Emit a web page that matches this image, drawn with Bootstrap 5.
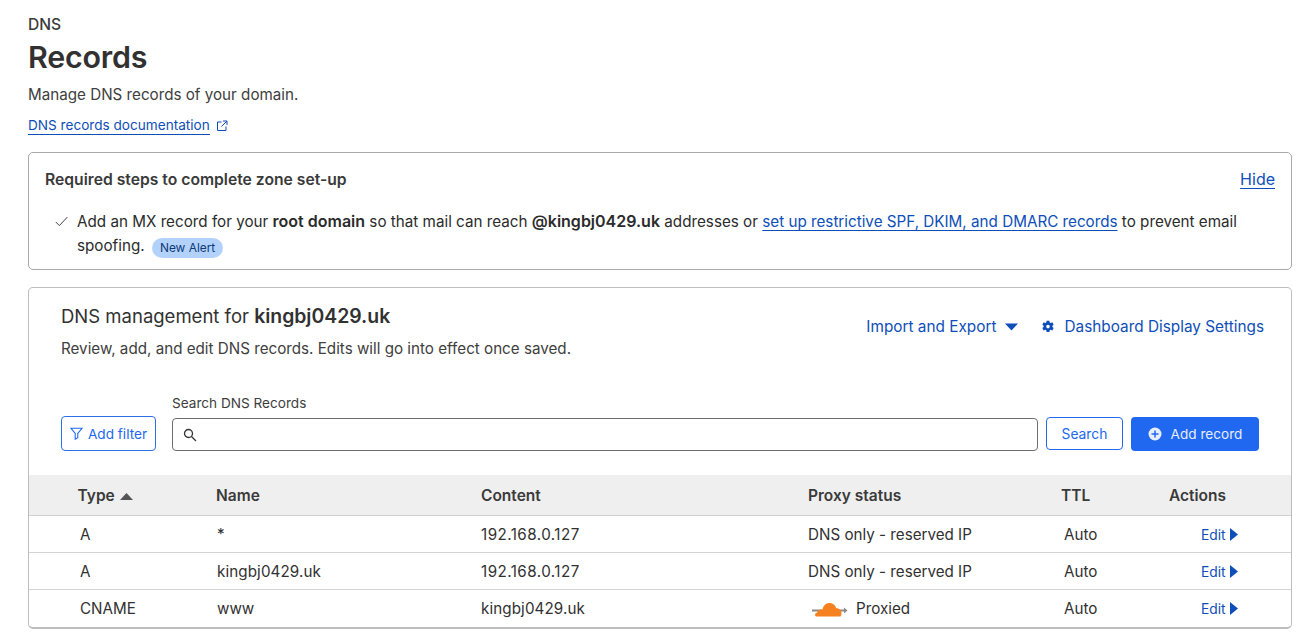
<!DOCTYPE html>
<html lang="en">
<head>
<meta charset="utf-8">
<title>DNS Records</title>
<link href="https://cdn.jsdelivr.net/npm/bootstrap@5.3.0/dist/css/bootstrap.min.css" rel="stylesheet">
<style>
html,body{height:639px;overflow:hidden}
body{font-family:Inter,"Liberation Sans",sans-serif;color:#313131;background:#fff;font-size:16px;line-height:24px}
a{color:#0e4eb8}
.page-wrap{padding:14px 24px 0 28px}
.eyebrow{font-size:15.6px;line-height:21px;font-weight:500;margin:0;color:#3a3a3a}
.page-title{font-size:30.4px;line-height:36px;font-weight:600;margin:4px 0 0;letter-spacing:-.2px}
.page-sub{font-size:15.2px;line-height:22px;margin:9px 0 0;color:#404040}
.doc-link{display:inline-flex;align-items:center;font-size:13.6px;line-height:18px;margin-top:10px;text-decoration:none}
.doc-link span{border-bottom:1px solid #0e4eb8}
.doc-link svg{margin-left:6px}
.steps-box{margin-top:16px;height:118px;border:1px solid #a9a9a9;border-radius:5px;padding:15px 16px 0 16px}
.steps-title{font-size:15.7px;line-height:24px;font-weight:600;margin:0;color:#3a3a3a}
.hide-link{font-size:16px;line-height:22px;color:#0e4eb8;text-decoration:underline;text-underline-offset:3px}
.step-row{margin-top:17px;font-size:15.22px;line-height:24px;color:#2b2b2b}
.step-row svg{flex:none;margin:7px 9px 0 10px}
.step-row b{font-weight:600;font-size:16px}
.step-row a{text-underline-offset:3px}
.alert-pill{display:inline-block;background:#b3d2fb;color:#0e3a7a;font-size:11.9px;line-height:20px;padding:0 8px;border-radius:10px;margin-left:3px;vertical-align:-1px}
.mgmt-box{margin-top:17px;height:342px;border:1px solid #bdbdbd;border-bottom:2px solid #bdbdbd;border-radius:5px;overflow:hidden}
.mgmt-head{height:105px;padding:15px 27px 0 32px}
.mgmt-title{font-size:18.5px;line-height:26px;margin:0;font-weight:400}
.mgmt-title b{font-weight:600;font-size:19.4px}
.mgmt-sub{font-size:15.2px;line-height:22px;margin:9px 0 0;color:#404040}
.head-links{margin-top:13px;gap:22px;font-size:15.35px;line-height:22px}
.head-links a{text-decoration:none;display:inline-flex;align-items:center}
.caret-gap{margin-left:8px}
.gear-gap{margin-right:9px}
.search-row{padding:0 32px 0 32px;height:82px}
.filter-btn{width:95px;height:35px;flex:none;margin:23px 16px 0 0;border:1px solid #2c6fe6;border-radius:4px;background:#fff;color:#2168f0;font-size:13.6px;padding:0;display:flex;align-items:center;justify-content:center;gap:5px}
.search-col{flex:1;min-width:0;padding-top:1px}
.search-label{font-size:13.6px;line-height:18px;color:#3d3d3d;margin:0 0 6px;display:block}
.search-field{height:33px;border:1px solid #6f6f6f;border-radius:4px;padding-left:10px}
.search-field input{border:0;outline:0;flex:1;min-width:0;background:transparent}
.search-btn{width:77px;height:33px;flex:none;margin:24px 0 0 8px;border:1px solid #2168f0;border-radius:4px;background:#fff;color:#2168f0;font-size:13.8px;padding:0}
.add-btn{width:128px;height:34px;flex:none;margin:24px 0 0 8px;border:0;border-radius:4px;background:#2168f0;color:#e6eefc;font-size:13.6px;padding:0;display:flex;align-items:center;justify-content:center;gap:9px}
.dns-table{table-layout:fixed;width:100%;margin:0;font-size:15.2px;color:#313131}
.dns-table th{background:#efefef;height:40px;padding:2px 0 0;font-weight:600;font-size:15.5px;vertical-align:middle;border-bottom:1px solid #cfcfcf;color:#3a3a3a;box-shadow:none}
.dns-table th.th1{padding-left:48.500px}
.sort-caret{margin-left:5px}
.dns-table td{height:37px;padding:2px 0 0;vertical-align:middle;border-bottom:1px solid #d4d4d4;color:#313131;background:#fff;box-shadow:none}
.dns-table tr:last-child td{border-bottom:0}
.dns-table td.c1{padding-left:51px}
.dns-table td.c2{padding-left:1px}
.dns-table td.c5{padding-left:3px}
.ip-cell{letter-spacing:.45px}
.domain-cell{letter-spacing:.1px}
.edit-link{display:inline-flex;align-items:center;font-size:13.8px;text-decoration:none;margin-left:32px;color:#0e4eb8}
.edit-link svg{margin-left:4px}
.proxied{display:flex;align-items:center}
.proxied svg{margin:0 8px 0 3px}
</style>
</head>
<body>
<div class="page-wrap">
  <p class="eyebrow">DNS</p>
  <h1 class="page-title">Records</h1>
  <p class="page-sub">Manage DNS records of your domain.</p>
  <a class="doc-link" href="#"><span>DNS records documentation</span>
    <svg width="12" height="12" viewBox="0 0 12 12" fill="none" stroke="#0e4eb8" stroke-width="1"><path d="M5.500 2H1.500v8.500H10V6.500"/><path d="M7 1h4v4M11 1 5.500 6.500"/></svg>
  </a>

  <section class="steps-box">
    <div class="d-flex justify-content-between align-items-start">
      <p class="steps-title">Required steps to complete zone set-up</p>
      <a class="hide-link" href="#">Hide</a>
    </div>
    <div class="step-row d-flex">
      <svg width="13" height="11" viewBox="0 0 13 11" fill="none" stroke="#444" stroke-width="1"><path d="M.8 6 4.400 9.600 12.400 1"/></svg>
      <div>Add an MX record for your <b>root domain</b> so that mail can reach <b>@kingbj0429.uk</b> addresses or <a href="#">set up restrictive SPF, DKIM, and DMARC records</a> to prevent email spoofing. <span class="alert-pill">New Alert</span></div>
    </div>
  </section>

  <section class="mgmt-box">
    <div class="mgmt-head d-flex justify-content-between align-items-start">
      <div>
        <h2 class="mgmt-title">DNS management for <b>kingbj0429.uk</b></h2>
        <p class="mgmt-sub">Review, add, and edit DNS records. Edits will go into effect once saved.</p>
      </div>
      <div class="head-links d-flex">
        <a href="#">Import and Export<svg class="caret-gap" width="15" height="8" viewBox="0 0 14 8" fill="#0e4eb8"><path d="M.5.500h13L7 7.500z"/></svg></a>
        <a href="#"><svg class="gear-gap" width="14" height="14" viewBox="0 0 14 14" fill="#0e4eb8" fill-rule="evenodd"><path d="M5.600.800h2.800l.3 1.700 1 .5 1.600-.7 1.400 2.400-1.300 1.100v1.200l1.300 1.100-1.400 2.400-1.600-.7-1 .5-.3 1.700H5.600l-.3-1.700-1-.5-1.600.7-1.400-2.400 1.300-1.100V5.800L1.300 4.700l1.400-2.400 1.600.7 1-.5zM7 4.800a1.800 1.800 0 1 0 0 3.600 1.800 1.800 0 0 0 0-3.600z"/></svg>Dashboard Display Settings</a>
      </div>
    </div>

    <div class="search-row d-flex align-items-start">
      <button class="filter-btn" type="button">
        <svg width="13" height="13" viewBox="0 0 13 13" fill="none" stroke="#2168f0" stroke-width="1.100"><path d="M.8 1.200h11.400L7.800 6.400v4.300l-2.600 1.500V6.400z"/></svg>Add filter
      </button>
      <div class="search-col">
        <label class="search-label" for="dns-q">Search DNS Records</label>
        <div class="search-field d-flex align-items-center">
          <svg class="me-2" width="14" height="14" viewBox="0 0 14 14" fill="none" stroke="#333" stroke-width="1.300"><circle cx="5.500" cy="5.500" r="4"/><path d="m8.500 8.500 4.500 4.500"/></svg>
          <input id="dns-q" type="text" aria-label="Search DNS Records">
        </div>
      </div>
      <button class="search-btn" type="button">Search</button>
      <button class="add-btn" type="button">
        <svg width="14" height="14" viewBox="0 0 14 14"><circle cx="7" cy="7" r="6.500" fill="#e6eefc"/><path d="M7 3.500v7M3.500 7h7" stroke="#2168f0" stroke-width="1.500"/></svg>Add record
      </button>
    </div>

    <table class="table dns-table">
      <colgroup><col style="width:187px"><col style="width:265px"><col style="width:327px"><col style="width:253px"><col style="width:108px"><col></colgroup>
      <thead>
        <tr>
          <th class="th1">Type<svg class="sort-caret" width="13" height="7" viewBox="0 0 13 7" fill="#555"><path d="M6.500 0 13 7H0z"/></svg></th>
          <th>Name</th><th>Content</th><th>Proxy status</th><th>TTL</th><th>Actions</th>
        </tr>
      </thead>
      <tbody>
        <tr><td class="c1">A</td><td class="c2">*</td><td class="ip-cell">192.168.0.127</td><td>DNS only - reserved IP</td><td class="c5">Auto</td><td><a class="edit-link" href="#">Edit<svg width="8" height="13" viewBox="0 0 8 13" fill="#0e4eb8"><path d="M0 0l8 6.500L0 13z"/></svg></a></td></tr>
        <tr><td class="c1">A</td><td class="c2 domain-cell">kingbj0429.uk</td><td class="ip-cell">192.168.0.127</td><td>DNS only - reserved IP</td><td class="c5">Auto</td><td><a class="edit-link" href="#">Edit<svg width="8" height="13" viewBox="0 0 8 13" fill="#0e4eb8"><path d="M0 0l8 6.500L0 13z"/></svg></a></td></tr>
        <tr><td class="c1">CNAME</td><td class="c2">www</td><td class="domain-cell">kingbj0429.uk</td><td><span class="proxied"><svg width="37" height="16" viewBox="0 0 37 16"><path d="M1 9.500h10M26 9.500h8" stroke="#8a8a8a" stroke-width="2"/><path d="M33 6.500l3.500 3-3.500 3z" fill="#8a8a8a"/><path d="M5.500 15.500C3.500 15.500 3.500 12 6 11.800c.4-2.600 3-3.800 5.300-3C12.300 4.500 15 2 18.500 2c3.400 0 6 2.300 6.700 5.300 3-.3 5.300 1.900 5.300 5 0 1.200-.3 2.300-1 3.200z" fill="#f6821f"/></svg>Proxied</span></td><td class="c5">Auto</td><td><a class="edit-link" href="#">Edit<svg width="8" height="13" viewBox="0 0 8 13" fill="#0e4eb8"><path d="M0 0l8 6.500L0 13z"/></svg></a></td></tr>
      </tbody>
    </table>
  </section>
</div>
</body>
</html>
